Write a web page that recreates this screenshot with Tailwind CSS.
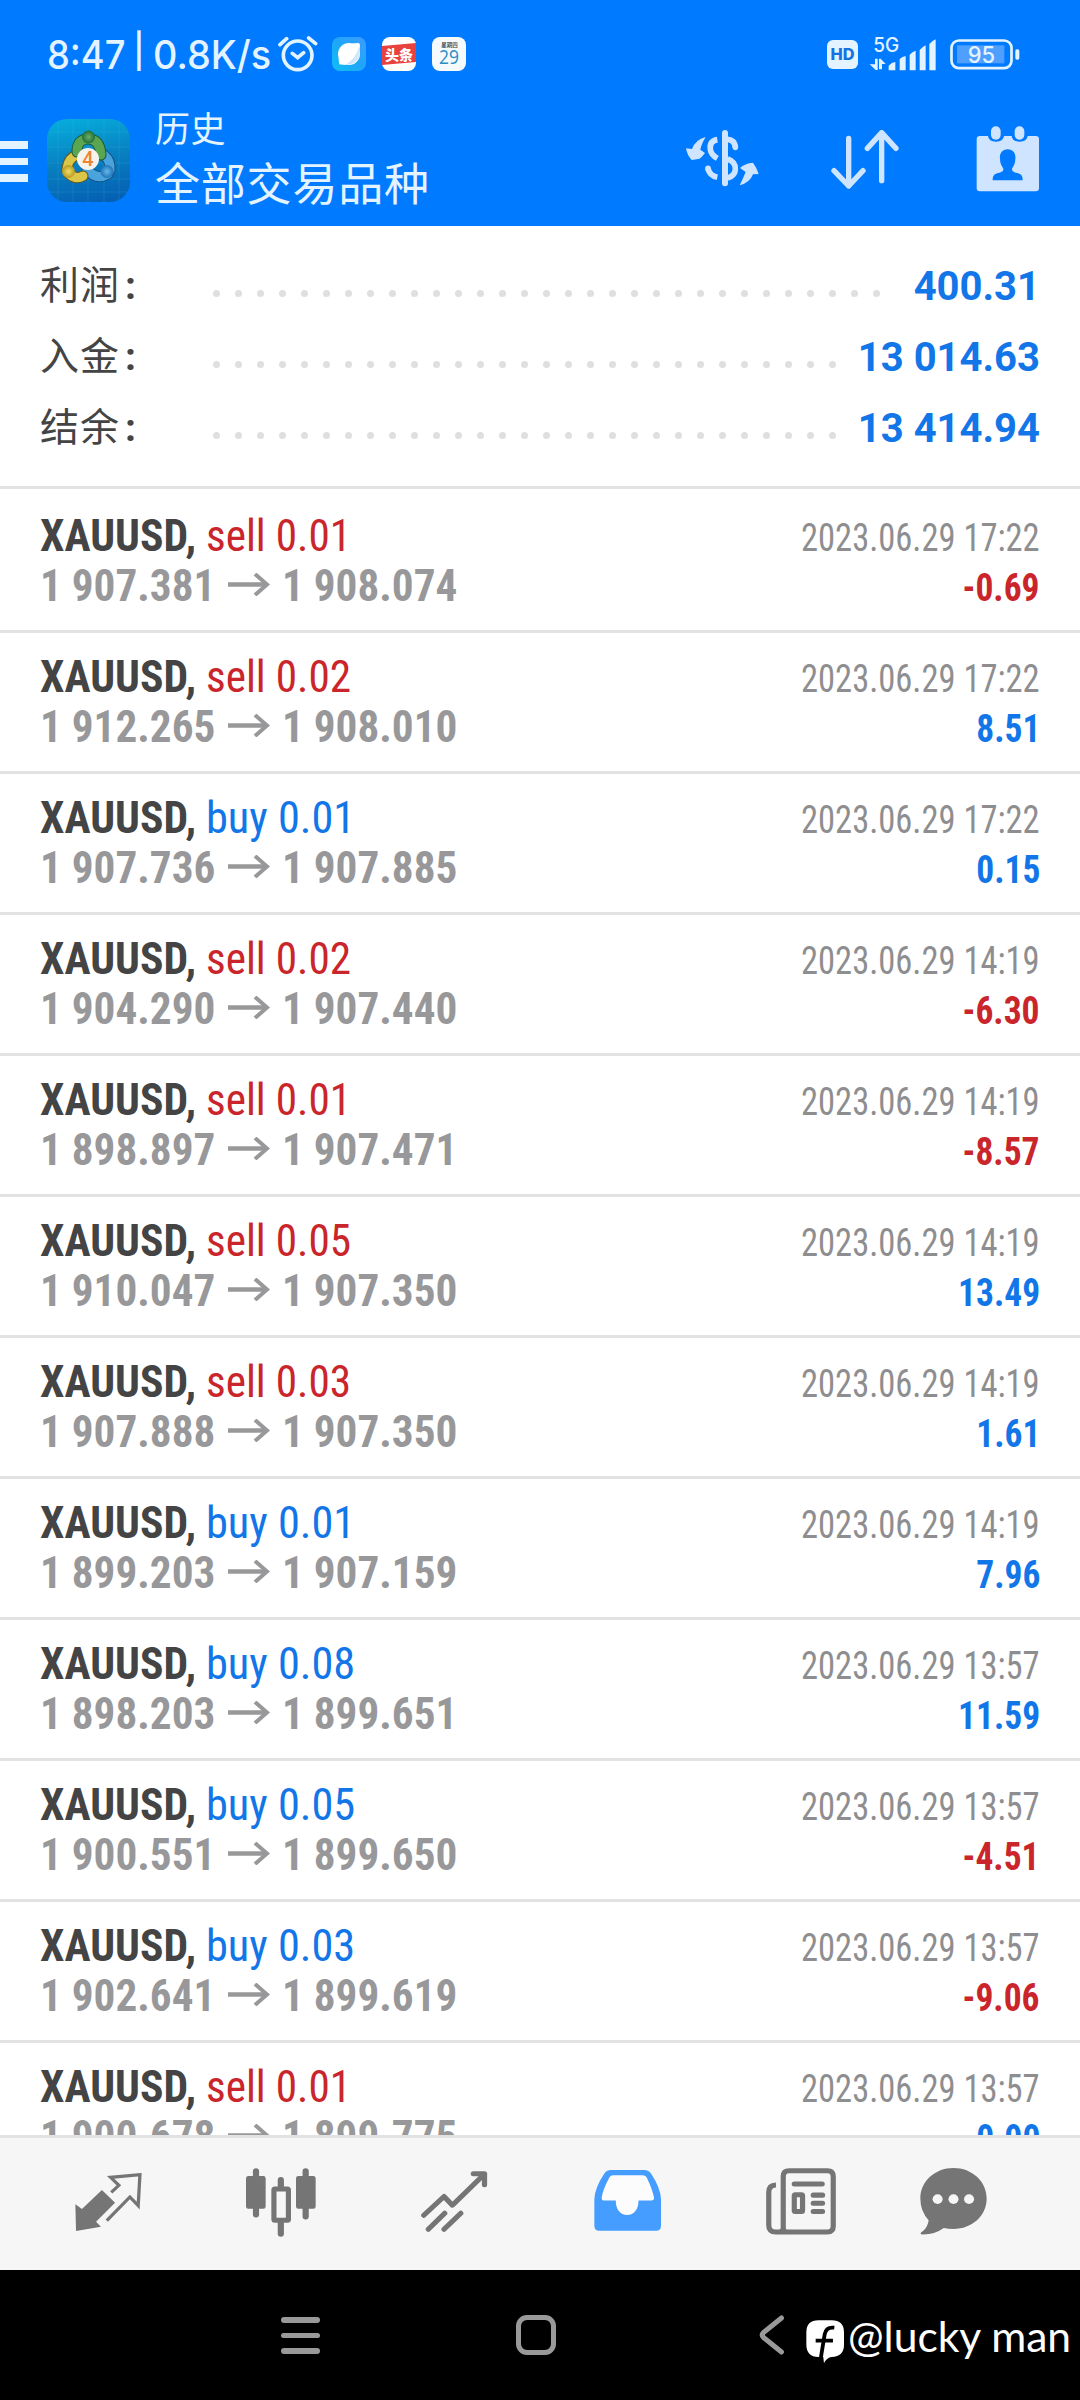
<!DOCTYPE html>
<html lang="zh-CN">
<head>
<meta charset="utf-8">
<title>历史</title>
<script src="https://cdn.jsdelivr.net/npm/@tailwindcss/browser@4"></script>
</head>
<body class="w-[1080px] h-[2400px] overflow-hidden bg-white font-['Roboto','Noto_Sans_CJK_SC',sans-serif]">
<div class="flex flex-col w-[1080px] h-[2400px] overflow-hidden">

  <header class="h-[226px] shrink-0 bg-[#007aff] text-[#e3f3ff] flex flex-col">
    <!-- status bar -->
    <div class="h-[108px] flex items-center">
      <span class="ml-[47px] w-[231px] flex whitespace-nowrap text-[39px] leading-none font-['Inter',sans-serif] font-[450]"><span class="w-[86px] origin-left scale-x-[0.93]">8:47</span><span class="w-[20px] -mt-[1px] text-[34px] font-medium">|</span><span class="origin-left scale-x-[0.97]">0.8K/s</span></span>
      <svg class="w-[40px] h-[36px] shrink-0" viewBox="833 107 120 108" fill="none" stroke="#e3f3ff" stroke-width="11" stroke-linecap="round"><circle cx="892" cy="165" r="43"/><path d="M839 133l20-18M925 113l21 17M876 159l16 13 18-15"/></svg>
      <svg class="ml-[14px] w-[34px] h-[34px] shrink-0" viewBox="0 0 34 34"><defs><linearGradient id="sky" x1="1" y1="0" x2="0" y2="1"><stop offset="0" stop-color="#3f9bff"/><stop offset=".5" stop-color="#1ea6f8"/><stop offset="1" stop-color="#10c0f4"/></linearGradient></defs><rect width="34" height="34" rx="8" fill="url(#sky)"/><circle cx="17" cy="17" r="11" fill="#fff"/><path d="M6.500 20l.5 6q0 1.500 1.500 1.500l6 .5zM20 6.500l6-.5q2 0 2 2l-.5 6z" fill="#fff"/><path d="M27 10q2 7-1 12-4 6-12 5.500 10-6.500 13-17.500z" fill="#cfe6fb"/></svg>
      <svg class="ml-[16px] w-[34px] h-[34px] shrink-0" viewBox="0 0 34 34"><rect width="34" height="34" rx="8" fill="#fff"/><path d="M0 9L34 6v19L0 28z" fill="#e8423f"/><text x="17" y="22.500" font-size="14" font-weight="900" text-anchor="middle" fill="#fff" font-family="Noto Sans CJK SC, sans-serif">头条</text></svg>
      <svg class="ml-[16px] w-[34px] h-[34px] shrink-0" viewBox="0 0 34 34"><rect width="34" height="34" rx="8" fill="#f4fafe"/><text x="17.500" y="9.500" font-size="5.500" font-weight="500" text-anchor="middle" fill="#333" font-family="Noto Sans CJK SC, sans-serif">星期四</text><text x="17" y="27" font-size="20" text-anchor="middle" fill="#2b8fc4" textLength="20" lengthAdjust="spacingAndGlyphs" font-family="Open Sans, sans-serif">29</text></svg>
      <svg class="ml-auto w-[31px] h-[29px] shrink-0" viewBox="0 0 31 29"><rect width="31" height="29" rx="6" fill="#e3f3ff"/><text x="15.500" y="20" font-size="15.500" font-weight="800" text-anchor="middle" fill="#1671e0" textLength="24" lengthAdjust="spacingAndGlyphs" font-family="Inter, sans-serif">HD</text></svg>
      <svg class="ml-[11px] w-[68px] h-[36px] shrink-0 overflow-visible" viewBox="690 107 204 108" fill="#e3f3ff"><text x="703" y="155" font-size="59" font-weight="500" textLength="78" lengthAdjust="spacingAndGlyphs" font-family="Inter, sans-serif">5G</text><path d="M708 175h8v34h-6l-18-17h16zM720 207v-32h5l15 16h-11v16zM749 210v-14q9-10 20-11v25zM782 210v-34q8-8 18-9v43zM812 210v-47q8-9 18-12v59zM842 210v-61q8-9 18-14v75zM871 210v-79q8-9 19-14v93z"/></svg>
      <svg class="ml-[13px] mr-[60px] w-[70px] h-[31px] shrink-0" viewBox="932 116 210 93"><rect x="936.500" y="120.500" width="180" height="83" rx="22" fill="none" stroke="#e3f3ff" stroke-width="8"/><rect x="953" y="135" width="142" height="54" fill="#4f9fff"/><rect x="1128" y="147" width="12" height="31" rx="5" fill="#e3f3ff"/><text x="1026" y="187" font-size="68" font-weight="500" text-anchor="middle" textLength="82" lengthAdjust="spacingAndGlyphs" fill="#e3f3ff" font-family="Inter, sans-serif">95</text></svg>
    </div>
    <!-- title bar -->
    <div class="h-[118px] flex items-start">
      <div class="mt-[33px] w-[28px] flex flex-col gap-[9px]"><i class="h-[7.500px] bg-[#e3f3ff]"></i><i class="h-[7.500px] bg-[#e3f3ff]"></i><i class="h-[7.500px] bg-[#e3f3ff]"></i></div>
      <svg class="mt-[11px] ml-[19px] w-[83px] h-[83px] shrink-0" viewBox="0 0 83 83">
        <defs>
          <linearGradient id="bg" x1=".4" y1="0" x2=".6" y2="1"><stop offset="0" stop-color="#06a9da"/><stop offset=".5" stop-color="#087fc0"/><stop offset="1" stop-color="#0560b4"/></linearGradient>
          <radialGradient id="gr"><stop offset="0" stop-color="#6fae66"/><stop offset="1" stop-color="#1f6e3a"/></radialGradient>
          <radialGradient id="ye"><stop offset="0" stop-color="#f2dd6a"/><stop offset="1" stop-color="#b89a22"/></radialGradient>
          <radialGradient id="bl"><stop offset="0" stop-color="#69b8ea"/><stop offset="1" stop-color="#1d74b8"/></radialGradient>
        </defs>
        <rect width="83" height="83" rx="20" fill="url(#bg)"/>
        <path d="M11 2v79M26 0v83M41 0v83M57 0v83M72 2v79M2 13h79M0 28h83M0 44h83M0 60h83M2 73h79" stroke="#52c4e6" stroke-opacity=".16" fill="none"/>
        <g fill="none" stroke-linecap="round">
          <path d="M57 36q7 6 6 15M61 55q-12 7-21-5" stroke="#14517f" stroke-width="11"/>
          <path d="M57 36q7 6 6 15M61 55q-12 7-21-5" stroke="#4aa3dd" stroke-width="9"/>
          <path d="M30 36q-9 3-10 14M22 55q7 6 14 2" stroke="#615a1e" stroke-width="11"/>
          <path d="M30 36q-9 3-10 14M22 55q7 6 14 2" stroke="#dcc64a" stroke-width="9"/>
          <path d="M30 33q0-13 11-13 12 0 13 16" stroke="#1d5c3a" stroke-width="11"/>
          <path d="M30 33q0-13 11-13 12 0 13 16" stroke="#5aa650" stroke-width="9"/>
        </g>
        <circle cx="41.500" cy="18" r="6.500" fill="url(#gr)"/><circle cx="21.500" cy="52.500" r="6.500" fill="url(#ye)"/><circle cx="60" cy="52.500" r="6.500" fill="url(#bl)"/>
        <circle cx="41" cy="40" r="11" fill="#f6f3ef"/>
        <text x="41" y="47" font-size="20" font-weight="500" text-anchor="middle" fill="#ee8434" font-family="Roboto, sans-serif">4</text>
      </svg>
      <div class="ml-[25px] flex flex-col font-['Noto_Sans_CJK_SC',sans-serif] font-normal">
        <span class="-mt-[1px] h-[40px] leading-[40px] text-[35px] tracking-[0.500px]">历史</span>
        <span class="mt-[8px] h-[54px] leading-[54px] text-[45px] tracking-[0.800px]">全部交易品种</span>
      </div>
      <svg class="mt-[22px] ml-auto w-[73px] h-[57px] shrink-0" viewBox="137 390 219 171" fill="none" stroke="#cfe5ff"><path d="M254 399v151" stroke-width="18" stroke-linecap="round"/><path d="M231 419q-24 4-21 29 2 16 21 27M262 418q21 2 23 24M203 505q4 22 28 27M262 477q23 8 23 30 0 20-23 27" stroke-width="17"/><path d="M285 440v2M203 505v1" stroke-width="17" stroke-linecap="round"/><path d="M196 411q-13 22-16 38l14 10q-14 18-20 18l-20 3q-14-15-17-35l18 2q10-28 41-36zM298 556q10-20 18-40l-17-12q14-14 39-16 12 16 17 34l-17 1q-10 26-40 33z" fill="#cfe5ff" stroke="none"/></svg>
      <svg class="mt-[22px] ml-[72px] w-[68px] h-[60px] shrink-0" viewBox="573 390 204 180" fill="none" stroke="#cfe5ff" stroke-width="16" stroke-linecap="round" stroke-linejoin="round"><path d="M626 415v143M582 512l44 46 43-46M725 542V398M682 445l43-47 43 47"/></svg>
      <svg class="mt-[18px] ml-[77px] mr-[40px] w-[64px] h-[66px] shrink-0" viewBox="1009 378 192 198" fill="#cfe5ff"><path d="M1021 408h24q2 17 24 17t24-17h23q2 17 24 17t24-17h24q10 0 10 10v146q0 10-10 10h-167q-10 0-10-10V418q0-10 10-10z"/><rect x="1054" y="379" width="29" height="40" rx="14"/><rect x="1125" y="379" width="29" height="40" rx="14"/><path d="M1104 448c18 0 25 14 23 30 0 12-5 20-10 28 0 8 3 9 16 13 12 3 16 9 16 22h-90c0-13 4-19 16-22 13-4 16-5 16-13-5-8-10-16-10-28-2-16 5-30 23-30z" fill="#007aff"/></svg>
    </div>
  </header>

  <!-- totals -->
  <section id="totals" class="h-[263px] shrink-0 pt-[25px] border-b-[3px] border-[#e2e2e2]"></section>

  <!-- deals -->
  <main id="deals" class="flex-1 min-h-0 overflow-hidden pt-[3px]"></main>

  <!-- tabs -->
  <nav class="h-[135px] shrink-0 bg-[#f6f6f6] border-t-[3px] border-[#e2e2e2] flex items-start">
    <svg class="mt-[35px] ml-[75px] w-[67px] h-[58px]" viewBox="218 429 194 174" preserveAspectRatio="none"><path d="M219 523l19 14 58-57 38 38-55 57 14 15-72 13z" fill="#757575"/><path d="M323 487l22-21-24-24 85-8-5 93-24-26-67 71" fill="none" stroke="#757575" stroke-width="9.500"/></svg>
    <svg class="mt-[30px] ml-[104px] w-[70px] h-[69px]" viewBox="715 413 203 206" preserveAspectRatio="none"><g fill="none" stroke="#757575" stroke-width="18" stroke-linecap="round"><path d="M744 423v129M888 423v135M816 449v24M816 575v34"/></g><rect x="715" y="437" width="57" height="98" rx="7" fill="#757575"/><rect x="860" y="437" width="57" height="98" rx="7" fill="#757575"/><rect x="796" y="476" width="42" height="93" rx="3" fill="#f6f6f6" stroke="#757575" stroke-width="15"/></svg>
    <svg class="mt-[32px] ml-[105px] w-[67px] h-[62px]" viewBox="1223 420 192 185" preserveAspectRatio="none" fill="none" stroke="#757575" stroke-width="15" stroke-linecap="round" stroke-linejoin="round"><path d="M1231 555l58-56 24 26 92-93M1373 431h32v33M1244 597l47-48M1289 597l48-48"/></svg>
    <svg class="mt-[32px] ml-[106px] w-[67px] h-[61px]" viewBox="157 422 194 182" preserveAspectRatio="none"><path d="M206 422h96q14 0 21 12 27 42 28 76v78q0 15-14 15H172q-14 0-14-15v-78q1-34 28-76 7-12 20-12z" fill="#449dff"/><path d="M213 438q-9 0-13 9-17 32-21 58 0 8 6 8h35c0 27 13 43 33 43s33-16 33-43h37q8 0 8-8-5-26-20-58-4-9-14-9z" fill="#fcfcfc"/></svg>
    <svg class="mt-[30px] ml-[105px] w-[70px] h-[67px]" viewBox="656 413 203 200" preserveAspectRatio="none" fill="none" stroke="#757575" stroke-width="15"><path d="M706 604V438q0-17 17-17h111q17 0 17 17v149q0 17-17 17H684q-20 0-20-20V485q0-20 21-21"/><path d="M686 604q20 0 20-17M706 587q0 17 17 17" stroke-width="10"/><path d="M738 461h81M793 494h27M793 518h27M793 543h27" stroke-linecap="round"/><rect x="738" y="493" width="24" height="50" rx="3"/></svg>
    <svg class="mt-[30px] ml-[84px] w-[67px] h-[67px]" viewBox="1102 413 194 200" preserveAspectRatio="none"><path d="M1199 413c54 0 96 40 96 91s-42 91-96 91q-16 0-28-3-28 21-66 19-4-4 5-9 15-13 17-33-24-27-24-65c0-51 42-91 96-91z" fill="#757575"/><g fill="#f6f6f6"><circle cx="1153" cy="506" r="14.500"/><circle cx="1199" cy="506" r="14.500"/><circle cx="1244" cy="506" r="14.500"/></g></svg>
  </nav>

  <!-- system navigation -->
  <footer class="h-[130px] shrink-0 bg-black flex items-start">
    <div class="mt-[47px] ml-[281px] w-[39px] flex flex-col gap-[10px]"><i class="h-[5.500px] rounded-full bg-[#999]"></i><i class="h-[5.500px] rounded-full bg-[#999]"></i><i class="h-[5.500px] rounded-full bg-[#999]"></i></div>
    <div class="mt-[45px] ml-[196px] w-[40px] h-[40px] border-[5px] border-[#999] rounded-[11px]"></div>
    <svg class="mt-[44px] ml-[203px] w-[26px] h-[42px]" viewBox="0 0 26 42" fill="none" stroke="#999" stroke-width="5" stroke-linecap="round" stroke-linejoin="round"><path d="M22.500 4L4.500 18.500q-2.500 2.500 0 5L22.500 38"/></svg>
    <svg class="mt-[50px] ml-[21px] w-[38px] h-[43px]" viewBox="772 870 110 129" preserveAspectRatio="none"><path d="M808 871h38q36 0 36 36v38q0 34-36 36-13 1-22 18l-2-18h-14q-34 0-35-36v-38q0-36 35-36z" fill="#fff"/><path d="M854 893q-24-3-28 20l-11 70M800 932h50" stroke="#000" stroke-width="11" fill="none"/></svg>
    <span class="ml-[4px] mt-[40px] whitespace-nowrap text-white text-[43px] leading-[52px] origin-left scale-x-[0.99] font-['Lato',sans-serif]">@lucky man</span>
  </footer>
</div>

<script>
  const totals = [['利润', '400.31', 31], ['入金', '13 014.63', 29], ['结余', '13 414.94', 29]];
  document.getElementById('totals').innerHTML = totals.map(([label, value, n]) => `
    <div class="h-[71px] pl-[40px] pr-[40px] flex items-center">
      <span class="w-[173px] text-[39px] leading-[71px] tracking-[1px] text-[#444] whitespace-nowrap">${label}<span class="ml-[5px] font-bold">:</span></span>
      <span class="mt-[13px] flex gap-[15px]">${'<i class="w-[7px] h-[7px] rounded-full bg-[#dfdfdf]"></i>'.repeat(n)}</span>
      <span class="ml-auto text-[40px] leading-[71px] font-bold text-[#1276e8] whitespace-nowrap">${value}</span>
    </div>`).join('');

  const deals = [
    ['sell', '0.01', '1 907.381', '1 908.074', '17:22', '-0.69'],
    ['sell', '0.02', '1 912.265', '1 908.010', '17:22', '8.51'],
    ['buy', '0.01', '1 907.736', '1 907.885', '17:22', '0.15'],
    ['sell', '0.02', '1 904.290', '1 907.440', '14:19', '-6.30'],
    ['sell', '0.01', '1 898.897', '1 907.471', '14:19', '-8.57'],
    ['sell', '0.05', '1 910.047', '1 907.350', '14:19', '13.49'],
    ['sell', '0.03', '1 907.888', '1 907.350', '14:19', '1.61'],
    ['buy', '0.01', '1 899.203', '1 907.159', '14:19', '7.96'],
    ['buy', '0.08', '1 898.203', '1 899.651', '13:57', '11.59'],
    ['buy', '0.05', '1 900.551', '1 899.650', '13:57', '-4.51'],
    ['buy', '0.03', '1 902.641', '1 899.619', '13:57', '-9.06'],
    ['sell', '0.01', '1 900.678', '1 899.775', '13:57', '0.90']
  ];
  const red = 'text-[#c9252b]', blue = 'text-[#1276e8]';
  document.getElementById('deals').innerHTML = deals.map(([side, lot, open, close, time, profit]) => `
    <div class="h-[141px] px-[40px] pt-[19px] border-b-[3px] border-[#e2e2e2] flex justify-between whitespace-nowrap font-stretch-[75%] font-['Roboto_Condensed','Roboto',sans-serif]">
      <div class="flex flex-col text-[45px] leading-[50px]">
        <div class="h-[50px] flex"><b class="w-[166px] origin-left scale-x-[0.97] font-bold text-[#444]">XAUUSD,</b><span class="origin-left ${side === 'sell' ? 'scale-x-[0.96]' : 'scale-x-[0.985]'} ${side === 'sell' ? red : blue}">${side} ${lot}</span></div>
        <div class="h-[50px] flex items-center font-bold text-[#98989a]"><span class="w-[174px] shrink-0 origin-left scale-x-[0.96]">${open}</span><svg class="-mt-[3px] ml-[14px] mr-[12px] w-[42px] h-[23px] shrink-0" viewBox="0 0 42 23" fill="none" stroke="#98989a"><path d="M0 11.500h39" stroke-width="4.500"/><path d="M27 1l12 10.500L27 22" stroke-width="4"/></svg><span class="origin-left scale-x-[0.96]">${close}</span></div>
      </div>
      <div class="flex flex-col items-end text-[39px]">
        <span class="h-[50px] leading-[54px] origin-right scale-x-[0.885] text-[#8e8e90]">2023.06.29 ${time}</span>
        <span class="h-[50px] leading-[54px] origin-right scale-x-[0.91] font-bold ${profit.startsWith('-') ? red : blue}">${profit}</span>
      </div>
    </div>`).join('');
</script>
</body>
</html>
